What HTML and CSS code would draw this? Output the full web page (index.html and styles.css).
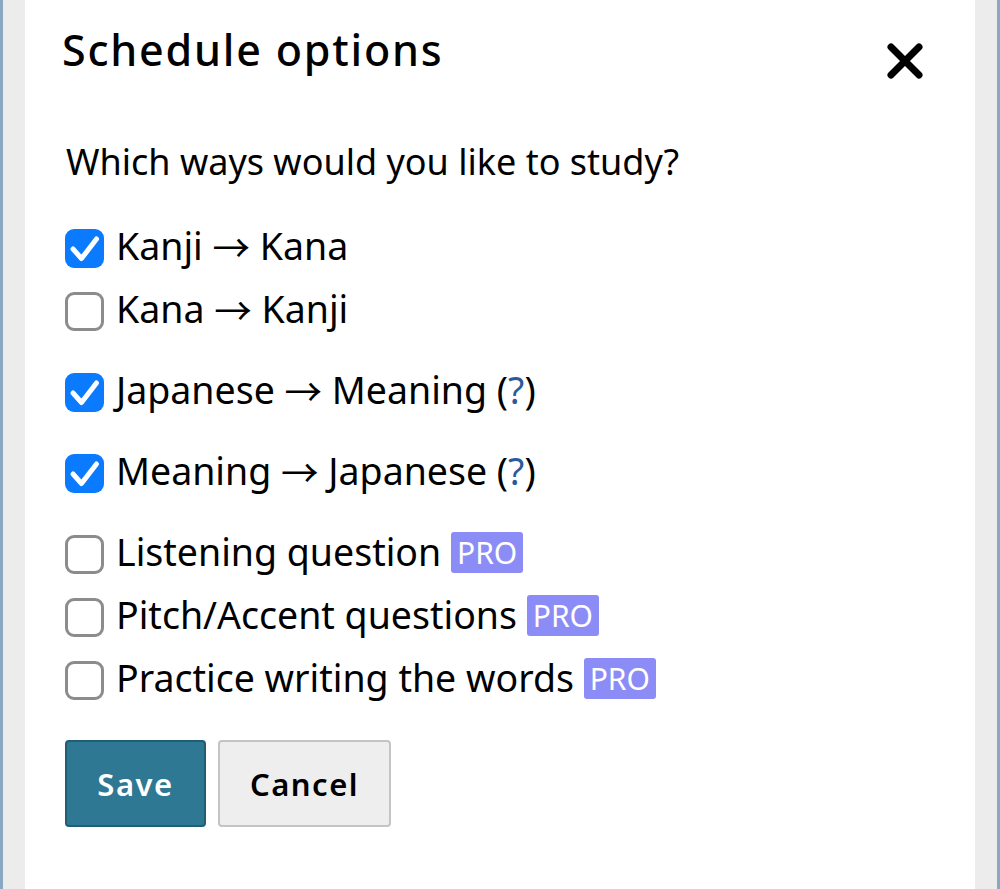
FILE: index.html
```html
<!DOCTYPE html>
<html>
<head>
<meta charset="utf-8">
<link rel="stylesheet" href="styles.css">
</head>
<body>
<div class="backdrop">
  <div class="modal">
    <div class="header">
      <h1 class="title">Schedule options</h1>
      <button class="close" aria-label="Close">
        <svg viewBox="0 0 40 40" width="40" height="40"><path d="M6 6 L34 34 M34 6 L6 34" stroke="#000" stroke-width="7" stroke-linecap="round"/></svg>
      </button>
    </div>
    <p class="question">Which ways would you like to study?</p>
    <div class="group first">
      <label class="opt"><span class="box checked"><svg viewBox="0 0 39 39"><path d="M8 20 L16.5 29.5 L31.5 10" fill="none" stroke="#fff" stroke-width="5" stroke-linecap="round" stroke-linejoin="round"/></svg></span><span class="lbl">Kanji <span class="arrow">→</span> Kana</span></label>
      <label class="opt"><span class="box"></span><span class="lbl">Kana <span class="arrow">→</span> Kanji</span></label>
    </div>
    <div class="group">
      <label class="opt"><span class="box checked"><svg viewBox="0 0 39 39"><path d="M8 20 L16.5 29.5 L31.5 10" fill="none" stroke="#fff" stroke-width="5" stroke-linecap="round" stroke-linejoin="round"/></svg></span><span class="lbl">Japanese <span class="arrow">→</span> Meaning (<span class="help">?</span>)</span></label>
    </div>
    <div class="group">
      <label class="opt"><span class="box checked"><svg viewBox="0 0 39 39"><path d="M8 20 L16.5 29.5 L31.5 10" fill="none" stroke="#fff" stroke-width="5" stroke-linecap="round" stroke-linejoin="round"/></svg></span><span class="lbl">Meaning <span class="arrow">→</span> Japanese (<span class="help">?</span>)</span></label>
    </div>
    <div class="group">
      <label class="opt"><span class="box"></span><span class="lbl">Listening question <span class="pro">PRO</span></span></label>
      <label class="opt"><span class="box"></span><span class="lbl">Pitch/Accent questions <span class="pro">PRO</span></span></label>
      <label class="opt"><span class="box"></span><span class="lbl">Practice writing the words <span class="pro">PRO</span></span></label>
    </div>
    <div class="actions">
      <button class="btn save">Save</button>
      <button class="btn cancel">Cancel</button>
    </div>
  </div>
</div>
</body>
</html>
```
FILE: styles.css
```css
html, body {
  margin: 0;
  padding: 0;
  height: 100%;
}
body {
  font-family: "Noto Sans", "DejaVu Sans", sans-serif;
  color: #000;
  background: #ececec;
}
.backdrop {
  min-height: 100%;
  box-sizing: border-box;
  border-left: 3px solid #8aa8c2;
  border-right: 3px solid #8aa8c2;
  padding: 0 22px;
  background: #ececec;
}
.modal {
  background: #fff;
  min-height: 889px;
  box-sizing: border-box;
  padding: 22px 50px 40px 37px;
}
.header {
  display: flex;
  justify-content: space-between;
  align-items: flex-start;
  height: 59px;
}
.title {
  margin: 0;
  font-size: 43px;
  font-weight: 500;
  letter-spacing: 1.8px;
  line-height: 56px;
}
.close {
  background: none;
  border: 0;
  padding: 0;
  margin-top: 19px;
  width: 40px;
  height: 40px;
  cursor: pointer;
}
.close svg {
  display: block;
}
.question {
  margin: 56px 0 0 4px;
  font-size: 36px;
  line-height: 50px;
}
.group {
  display: flex;
  flex-direction: column;
  margin-top: 18px;
}
.group.first {
  margin-top: 27.5px;
}
.opt {
  display: flex;
  align-items: center;
  height: 63px;
}
.box {
  width: 39px;
  height: 39px;
  box-sizing: border-box;
  border: 3px solid #8c8c8c;
  border-radius: 9px;
  margin-left: 3px;
  margin-right: 12px;
  margin-top: 4px;
  flex: none;
}
.box.checked {
  background: #0a7aff;
  border: 0;
}
.box svg {
  display: block;
  width: 39px;
  height: 39px;
}
.lbl {
  font-size: 37.5px;
  line-height: 50px;
  display: flex;
  align-items: center;
  white-space: pre;
}
.arrow {
  font-family: "Noto Sans CJK JP", "DejaVu Sans", sans-serif;
}
.help {
  color: #2a5a9c;
}
.pro {
  background: #8c8cf6;
  color: #fff;
  font-size: 30px;
  line-height: 41px;
  padding: 0 6px;
  border-radius: 3px;
  margin-left: 0;
}
.actions {
  display: flex;
  gap: 12px;
  margin-top: 30.5px;
  margin-left: 3px;
}
.btn {
  font-family: "Noto Sans", "DejaVu Sans", sans-serif;
  font-size: 31px;
  font-weight: 600;
  letter-spacing: 1.5px;
  height: 87px;
  border-radius: 4px;
  cursor: pointer;
}
.save {
  width: 141px;
  background: #2e7893;
  border: 2px solid #1e5f77;
  color: #fff;
}
.cancel {
  width: 173px;
  background: #eeeeee;
  border: 2px solid #c4c4c4;
  color: #000;
}
```
